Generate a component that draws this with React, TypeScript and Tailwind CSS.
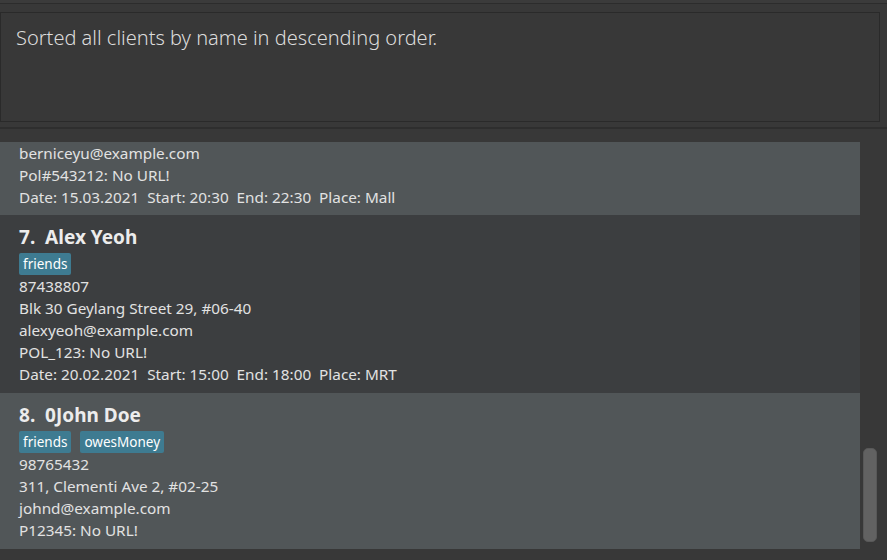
const font = { fontFamily: '"Noto Sans", "Open Sans", sans-serif' };

type Client = {
  index?: number;
  name?: string;
  tags?: string[];
  lines: string[];
  light: boolean;
};

const clients: Client[] = [
  {
    light: true,
    lines: [
      "berniceyu@example.com",
      "Pol#543212: No URL!",
      "Date: 15.03.2021  Start: 20:30  End: 22:30  Place: Mall",
    ],
  },
  {
    index: 7,
    name: "Alex Yeoh",
    tags: ["friends"],
    light: false,
    lines: [
      "87438807",
      "Blk 30 Geylang Street 29, #06-40",
      "alexyeoh@example.com",
      "POL_123: No URL!",
      "Date: 20.02.2021  Start: 15:00  End: 18:00  Place: MRT",
    ],
  },
  {
    index: 8,
    name: "0John Doe",
    tags: ["friends", "owesMoney"],
    light: true,
    lines: ["98765432", "311, Clementi Ave 2, #02-25", "johnd@example.com", "P12345: No URL!"],
  },
];

const ClientCard = ({ client }: { client: Client }) => {
  return (
    <div
      className={`pl-[19px] ${client.name ? "pt-[9px] pb-[8px]" : "pt-0 pb-[7px]"} ${
        client.light ? "bg-[#515658]" : "bg-[#3c3e40]"
      }`}
    >
      {client.name && (
        <p className="text-[19px] font-bold text-[#ececec] leading-[26px] whitespace-pre">
          {client.index}.{"  "}
          {client.name}
        </p>
      )}
      {client.tags && (
        <div className="flex gap-[9px] mt-[3px]">
          {client.tags.map((tag) => (
            <span
              key={tag}
              className="bg-[#3e7b91] text-white text-[13.5px] leading-[22px] px-[4px] rounded-[2px]"
            >
              {tag}
            </span>
          ))}
        </div>
      )}
      {client.lines.map((line, i) => (
        <p key={i} className="text-[15.3px] leading-[22px] text-[#e2e2e2] whitespace-pre">
          {line}
        </p>
      ))}
    </div>
  );
};

const App = () => {
  return (
    <div className="w-[887px] h-[560px] bg-[#383838] overflow-hidden flex flex-col" style={font}>
      <div className="h-[3px] bg-[#3b3b3b]" />
      <div className="h-px bg-[#2c2c2c]" />
      <div className="pt-[8px] pr-[7px] pb-[5px]">
        <div className="h-[110px] border border-[#2a2a2a] bg-[#383838] px-[15px] pt-[10px]">
          <p className="text-[20px] text-[#dcdcdc] font-light">
            Sorted all clients by name in descending order.
          </p>
        </div>
      </div>
      <div className="h-[2px] bg-[#2e2e2e]" />
      <div className="flex flex-1 min-h-0 pt-[13px]">
        <div className="w-[860px] flex flex-col">
          {clients.map((c, i) => (
            <ClientCard key={i} client={c} />
          ))}
        </div>
        <div className="flex-1 relative">
          <div className="absolute left-[3px] w-[14px] top-[306px] h-[94px] rounded-[5px] bg-[#626262] border border-[#585858]" />
        </div>
      </div>
    </div>
  );
};

export default App;
